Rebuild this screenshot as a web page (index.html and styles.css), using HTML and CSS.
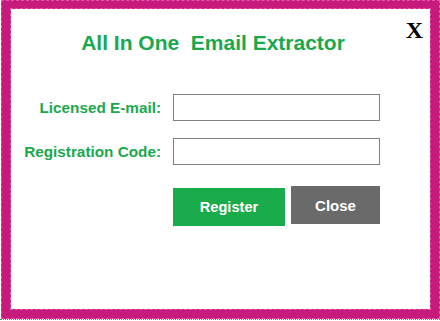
FILE: index.html
```html
<!DOCTYPE html>
<html>
<head>
<meta charset="utf-8">
<link rel="stylesheet" href="styles.css">
</head>
<body>
<div class="page">
  <div class="frame">
    <div class="panel">
      <button class="close-x" type="button">X</button>
      <h1 class="title">All In One&nbsp; Email Extractor</h1>
      <div class="form">
        <label class="label" for="email">Licensed E-mail:</label>
        <input class="field" id="email" type="text">
        <label class="label" for="code">Registration Code:</label>
        <input class="field" id="code" type="text">
      </div>
      <div class="actions">
        <button class="btn btn-register" type="button">Register</button>
        <button class="btn btn-close" type="button">Close</button>
      </div>
    </div>
  </div>
</div>
</body>
</html>
```

FILE: styles.css
```css
html, body {
  margin: 0;
  padding: 0;
  background: #ffffff;
}

.page {
  width: 440px;
  height: 320px;
  padding-left: 1px;
  box-sizing: border-box;
  border-bottom: 1px dotted #7a7a7a;
}

.frame {
  width: 439px;
  height: 319px;
  box-sizing: border-box;
  border-style: solid;
  border-color: #c71a7d;
  border-width: 9px 10px 10px 10px;
  outline: 1px dashed #e955ad;
  outline-offset: -1px;
}

.panel {
  position: relative;
  height: 100%;
  background: #ffffff;
  box-sizing: border-box;
  padding-top: 22px;
  outline: 1px dashed #e955ad;
  font-family: "Liberation Sans", Arial, sans-serif;
}

.close-x {
  position: absolute;
  top: 9px;
  right: 7px;
  margin: 0;
  padding: 0;
  border: none;
  background: transparent;
  font-family: "Liberation Serif", "Times New Roman", serif;
  font-weight: bold;
  font-size: 24px;
  line-height: 24px;
  color: #000000;
  cursor: pointer;
}

.title {
  margin: 0;
  padding-right: 15px;
  text-align: center;
  font-size: 21px;
  line-height: 24px;
  font-weight: bold;
  color: #1aa84c;
}

.form {
  display: grid;
  grid-template-columns: 150px 207px;
  column-gap: 12px;
  row-gap: 17px;
  align-items: center;
  margin-top: 39px;
}

.label {
  text-align: right;
  font-size: 15.3px;
  font-weight: bold;
  color: #1aa84c;
  white-space: nowrap;
}

.field {
  height: 27px;
  box-sizing: border-box;
  margin: 0;
  border: 1px solid #808080;
  background: #ffffff;
  padding: 0 4px;
}

.actions {
  display: flex;
  align-items: flex-start;
  gap: 6px;
  margin-top: 21px;
  padding-left: 162px;
}

.btn {
  height: 38px;
  margin: 0;
  padding: 0;
  border: none;
  color: #ffffff;
  font-family: "Liberation Sans", Arial, sans-serif;
  font-weight: bold;
  font-size: 14.6px;
  cursor: pointer;
}

.btn-register {
  width: 112px;
  margin-top: 2px;
  background: #1aab4b;
}

.btn-close {
  width: 89px;
  background: #6a6a6a;
  font-size: 15px;
}
```
